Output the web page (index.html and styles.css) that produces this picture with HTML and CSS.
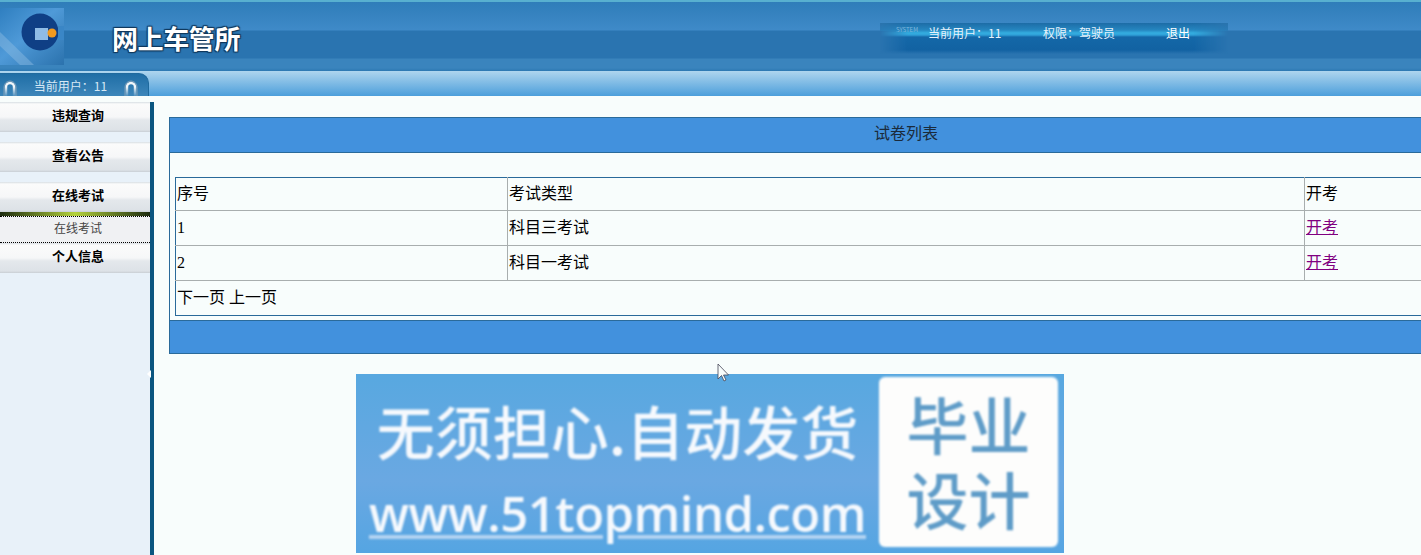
FILE: index.html
```html
<!DOCTYPE html>
<html>

<head>
  <title>网上车管所</title>
  <link rel="stylesheet" href="styles.css">
</head>

<body>
  <div class="header">
    <div class="logo">
      <svg width="64" height="57" viewBox="0 0 64 57">
        <defs>
          <linearGradient id="logobg" x1="0" y1="0" x2="1" y2="1">
            <stop offset="0" stop-color="#2f7fc0" />
            <stop offset="0.45" stop-color="#4f9ad8" />
            <stop offset="1" stop-color="#2b72ad" />
          </linearGradient>
        </defs>
        <rect width="64" height="57" fill="url(#logobg)" />
        <path d="M0 24 L34 57 L20 57 L0 38 Z" fill="#8fbde2" opacity="0.45" />
        <circle cx="40" cy="24" r="18.5" fill="#0f3f85" />
        <path d="M58 18 L64 18 L64 32 L58 32 Z" fill="#3a86c6" />
        <rect x="35" y="20" width="13" height="12" fill="#8fbce6" />
        <circle cx="52" cy="25" r="4.5" fill="#f29a1e" />
      </svg>
    </div>
    <h1 class="site-title">网上车管所</h1>
    <div class="user-box">
      <span class="system-tag">SYSTEM</span>
      <span class="user-name">当前用户：11</span>
      <span class="user-role">权限：驾驶员</span>
      <a class="logout">退出</a>
    </div>
  </div>

  <div class="subbar">
    <div class="user-tab">
      <svg class="arc" width="14" height="16" viewBox="0 0 14 16">
        <defs>
          <linearGradient id="fade" x1="0" y1="0" x2="0" y2="1">
            <stop offset="0.3" stop-color="#f2f6f9" />
            <stop offset="1" stop-color="#f2f6f9" stop-opacity="0.1" />
          </linearGradient>
        </defs>
        <path d="M1 16 V7 a6 6 0 0 1 12 0 V16" fill="none" stroke="#7f9fb8" stroke-width="1" />
        <path d="M3 16 V7 a4 4 0 0 1 8 0 V16" fill="none" stroke="url(#fade)" stroke-width="2.4" />
      </svg>
      <span>当前用户：11</span>
      <svg class="arc" width="14" height="16" viewBox="0 0 14 16">
        <path d="M1 16 V7 a6 6 0 0 1 12 0 V16" fill="none" stroke="#7f9fb8" stroke-width="1" />
        <path d="M3 16 V7 a4 4 0 0 1 8 0 V16" fill="none" stroke="url(#fade)" stroke-width="2.4" />
      </svg>
    </div>
  </div>

  <div class="layout">
    <div class="sidebar">
      <div class="menu-item">违规查询</div>
      <div class="menu-item">查看公告</div>
      <div class="menu-item">在线考试</div>
      <div class="menu-bar"></div>
      <div class="menu-sub">在线考试</div>
      <div class="menu-item">个人信息</div>
    </div>
    <div class="divider"><span class="divider-arrow"></span></div>

    <div class="main">
      <div class="panel">
        <div class="panel-head">试卷列表</div>
        <div class="panel-body">
          <table class="list">
            <tr>
              <td class="col-id">序号</td>
              <td class="col-type">考试类型</td>
              <td>开考</td>
            </tr>
            <tr>
              <td class="num">1</td>
              <td>科目三考试</td>
              <td><a class="start">开考</a></td>
            </tr>
            <tr>
              <td class="num">2</td>
              <td>科目一考试</td>
              <td><a class="start">开考</a></td>
            </tr>
            <tr>
              <td colspan="3">下一页 上一页</td>
            </tr>
          </table>
        </div>
        <div class="panel-foot"></div>
      </div>

      <div class="banner">
        <div class="banner-text">
          <div class="banner-slogan">无须担心.自动发货</div>
          <div class="banner-url">www.51topmind.com</div>
        </div>
        <div class="banner-box">毕业<br>设计</div>
      </div>

      <svg class="cursor" width="13" height="20" viewBox="0 0 13 20"><path d="M1 1 V16 L4.5 12.5 L7 18 L9 17 L6.5 12 H11.5 Z" fill="#f8fdfc" stroke="#445" stroke-width="0.8" /></svg>
    </div>
  </div>
</body>

</html>
```

FILE: styles.css
```css
body {
  margin: 0;
  height: 555px;
  overflow: hidden;
  background-color: #f8fdfc;
  color: #000;
  font-family: "Liberation Serif", "Noto Sans CJK SC", serif;
  font-size: 16px;
}

.header {
  display: flex;
  height: 71px;
  box-sizing: border-box;
  padding-top: 8px;
  background: linear-gradient(to bottom,
      #58b0d0 0, #58b0d0 2px,
      #2f7db9 2px, #3f8ac8 30px,
      #2a74b0 31px, #2a74b0 58px,
      #3a84bd 59px, #3a84bd 68px,
      #2c78b2 71px);
}

.logo {
  width: 64px;
  height: 57px;
}

.site-title {
  margin: 14px 0 0 48px;
  width: 768px;
  color: #fff;
  font-family: "Noto Sans CJK SC", sans-serif;
  font-size: 26px;
  letter-spacing: -0.4px;
  line-height: 32px;
  font-weight: 700;
  text-shadow: 1px 1px 1px #10385c, -1px -1px 1px #10385c, 1px -1px 1px #10385c, -1px 1px 1px #10385c;
}

.user-box {
  position: relative;
  display: flex;
  width: 348px;
  height: 31px;
  margin-top: 15px;
  padding-top: 1px;
  color: #e6f2fb;
  font-family: "Noto Sans CJK SC", sans-serif;
  font-size: 12px;
  line-height: 18px;
  background: linear-gradient(to bottom, #2a74ae, #2a7cb8) 0 0 / 100% 8px no-repeat;
  box-sizing: border-box;
}

.user-box::before {
  content: "";
  position: absolute;
  top: 0;
  left: 0;
  right: 0;
  bottom: 0;
  background: linear-gradient(to bottom,
      #1d6ca6 0, #2586c0 7px, #34aee0 10px, #2fa0d8 12px,
      #1468a8 14px, #1262a2 27px, #1262a200 31px);
  -webkit-mask-image: linear-gradient(to right, transparent 0, #000 8%, #000 90%, transparent 100%);
  mask-image: linear-gradient(to right, transparent 0, #000 8%, #000 90%, transparent 100%);
}

.user-box span,
.user-box a {
  position: relative;
}

.user-box .system-tag {
  position: absolute;
  left: 16px;
  top: 3px;
  font-size: 6px;
  line-height: 8px;
  color: #7fb6dc;
}

.user-name {
  margin-left: 48px;
  width: 115px;
}

.user-role {
  width: 123px;
}

.logout {
  color: #fff;
}

.subbar {
  height: 25px;
  background: linear-gradient(to bottom, #aed5ee, #4d9fdb);
}

.user-tab {
  display: flex;
  align-items: center;
  justify-content: space-between;
  box-sizing: border-box;
  width: 149px;
  height: 23px;
  position: relative;
  top: 2px;
  padding: 0 10px 0 3px;
  color: #d6e8f5;
  font-family: "Noto Sans CJK SC", sans-serif;
  font-size: 12px;
  border: 1px solid #1f6a9e;
  border-bottom: 0;
  border-left: 0;
  border-top-right-radius: 10px;
  background: linear-gradient(to bottom, #1f6ea6, #3d86ba);
}

.arc {
  margin-top: 6px;
}

.layout {
  display: flex;
  height: 459px;
}

.sidebar {
  width: 150px;
  flex-shrink: 0;
  margin-top: 6px;
  background-color: #e8f1f9;
  font-family: "Noto Sans CJK SC", sans-serif;
  font-size: 13px;
  text-align: center;
}

.menu-item {
  height: 30px;
  margin-bottom: 10px;
  padding-left: 6px;
  line-height: 25px;
  font-weight: 700;
  background: linear-gradient(to bottom, #d8dee3 0, #fbfbfb 2px, #f6f7f8 15px, #e4e8ec 18px, #dde2e7 28px, #c8ced4 30px);
}

.menu-item:nth-child(3) {
  margin-bottom: 0;
}

.menu-sub + .menu-item {
  line-height: 26px;
}

.menu-bar {
  height: 4px;
  background: linear-gradient(to right, #1d2c10, #b4d23c 50%, #1d2c10);
}

.menu-sub {
  height: 27px;
  margin-bottom: 0;
  padding-left: 6px;
  border-top: 1px dotted #000;
  border-bottom: 1px dotted #000;
  box-sizing: border-box;
  font-size: 12px;
  line-height: 22px;
  color: #444;
  background-color: #f0f1f3;
}

.divider {
  position: relative;
  width: 4px;
  flex-shrink: 0;
  margin-top: 6px;
  background-color: #0b5680;
}

.divider-arrow {
  position: absolute;
  left: -3px;
  top: 268px;
  border: 4px solid transparent;
  border-left-width: 0;
  border-right-color: #fff;
}

.main {
  position: relative;
  flex: 1;
  min-width: 0;
  overflow: hidden;
  padding: 21px 0 0 15px;
}

.panel {
  width: 1474px;
  box-sizing: border-box;
  border: 1px solid #2a6a9a;
}

.panel-head {
  height: 34px;
  border-bottom: 1px solid #2a6a9a;
  background-color: #4291dd;
  color: #1a2a3a;
  font-family: "Noto Sans CJK SC", sans-serif;
  font-size: 16px;
  line-height: 29px;
  text-align: center;
}

.panel-body {
  padding: 24px 5px 4px;
}

.panel-foot {
  height: 32px;
  border-top: 1px solid #2a6a9a;
  background-color: #4291dd;
}

.list {
  width: 100%;
  table-layout: fixed;
  border-collapse: collapse;
}

.list td {
  height: 30px;
  padding: 0 1px 4px;
  border: 1px solid #a8aeae;
}

.list td:first-child {
  border-left-color: #2a6a9a;
}

.list .num {
  padding-bottom: 0;
}

.list tr:first-child td {
  border-top-color: #2a6a9a;
  height: 27px;
  padding-bottom: 5px;
}

.list tr:last-child td {
  border-bottom-color: #2a6a9a;
  height: 30px;
}

.col-id {
  width: 329px;
}

.col-type {
  width: 794px;
}

.start {
  color: #800080;
  text-decoration: underline;
}

.banner {
  display: flex;
  justify-content: space-between;
  box-sizing: border-box;
  width: 708px;
  height: 179px;
  margin: 20px 0 0 187px;
  padding: 3px 6px 6px 0;
  background: linear-gradient(to bottom, #58a8e0, #6aa8e2 60%, #55a5e2);
  font-family: "Noto Sans CJK SC", sans-serif;
}

.banner-text {
  width: 523px;
  color: #f6f9fd;
  text-align: center;
  filter: blur(0.8px);
}

.banner-slogan {
  margin-top: 20px;
  font-size: 58px;
  line-height: 66px;
  font-weight: 500;
  white-space: nowrap;
}

.banner-url {
  margin-top: 22px;
  font-family: "Open Sans", sans-serif;
  font-size: 49px;
  line-height: 56px;
  font-weight: 600;
  letter-spacing: -0.5px;
  text-decoration: underline;
  text-decoration-color: #b4d4f2;
  white-space: nowrap;
}

.banner-box {
  width: 179px;
  padding-top: 9px;
  box-sizing: border-box;
  border-radius: 6px;
  background-color: #fdfdfc;
  color: #5f9cc8;
  font-size: 62px;
  font-weight: 500;
  line-height: 75px;
  text-align: center;
  filter: blur(0.8px);
}

.cursor {
  position: absolute;
  left: 563px;
  top: 267px;
}
```
